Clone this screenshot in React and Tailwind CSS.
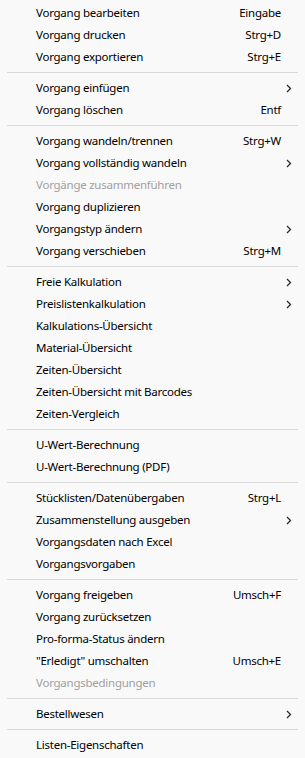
import React from 'react';

const sections = [
    [
        {label: 'Vorgang bearbeiten', shortcut: 'Eingabe'},
        {label: 'Vorgang drucken', shortcut: 'Strg+D'},
        {label: 'Vorgang exportieren', shortcut: 'Strg+E'},
    ],
    [
        {label: 'Vorgang einfügen', sub: true},
        {label: 'Vorgang löschen', shortcut: 'Entf'},
    ],
    [
        {label: 'Vorgang wandeln/trennen', shortcut: 'Strg+W'},
        {label: 'Vorgang vollständig wandeln', sub: true},
        {label: 'Vorgänge zusammenführen', disabled: true},
        {label: 'Vorgang duplizieren'},
        {label: 'Vorgangstyp ändern', sub: true},
        {label: 'Vorgang verschieben', shortcut: 'Strg+M'},
    ],
    [
        {label: 'Freie Kalkulation', sub: true},
        {label: 'Preislistenkalkulation', sub: true},
        {label: 'Kalkulations-Übersicht'},
        {label: 'Material-Übersicht'},
        {label: 'Zeiten-Übersicht'},
        {label: 'Zeiten-Übersicht mit Barcodes'},
        {label: 'Zeiten-Vergleich'},
    ],
    [
        {label: 'U-Wert-Berechnung'},
        {label: 'U-Wert-Berechnung (PDF)'},
    ],
    [
        {label: 'Stücklisten/Datenübergaben', shortcut: 'Strg+L'},
        {label: 'Zusammenstellung ausgeben', sub: true},
        {label: 'Vorgangsdaten nach Excel'},
        {label: 'Vorgangsvorgaben'},
    ],
    [
        {label: 'Vorgang freigeben', shortcut: 'Umsch+F'},
        {label: 'Vorgang zurücksetzen'},
        {label: 'Pro-forma-Status ändern'},
        {label: '"Erledigt" umschalten', shortcut: 'Umsch+E'},
        {label: 'Vorgangsbedingungen', disabled: true},
    ],
    [
        {label: 'Bestellwesen', sub: true},
    ],
    [
        {label: 'Listen-Eigenschaften'},
    ],
];

const Chevron = () => (
    <svg width="6" height="9" viewBox="0 0 6 9" className="ml-[5px]">
        <path d="M1 1 L4.5 4.5 L1 8" fill="none" stroke="#2b2b2b" strokeWidth="1.3"/>
    </svg>
);

const MenuItem = ({item}) => (
    <div className={`h-[22px] flex items-center pl-[36px] ${item.disabled ? 'text-[#a0a0a0]' : 'text-black'}`}>
        <span className="flex-1 whitespace-nowrap">{item.label}</span>
        {item.shortcut && <span className="whitespace-nowrap">{item.shortcut}</span>}
        <div className="w-[24px] h-full flex items-center">
            {item.sub && <Chevron/>}
        </div>
    </div>
);

const App = () => {
    return (
        <div
            className="w-[305px] min-h-[758px] bg-[#f9f9f9] py-[2px] text-[11.5px] tracking-[-0.25px] leading-none"
            style={{fontFamily: '"Noto Sans", "Open Sans", sans-serif'}}
        >
            {sections.map((section, i) => (
                <div key={i}>
                    {i > 0 && (
                        <div className="h-[9px] flex items-center px-[7px]">
                            <div className="h-px w-full bg-[#d9d9d9]"></div>
                        </div>
                    )}
                    {section.map((item) => (
                        <MenuItem key={item.label} item={item}/>
                    ))}
                </div>
            ))}
        </div>
    );
};

export default App;
